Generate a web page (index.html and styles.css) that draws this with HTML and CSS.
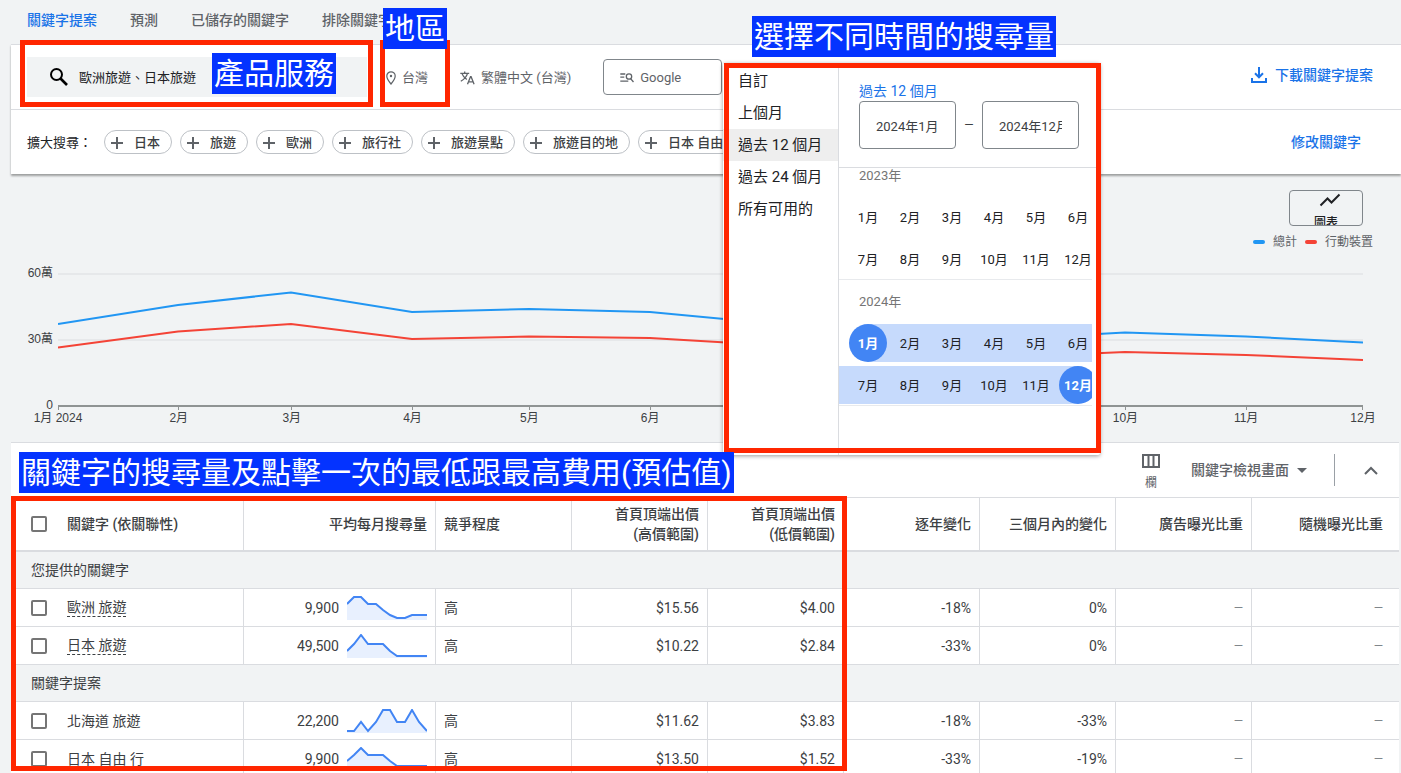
FILE: index.html
```html
<!DOCTYPE html>
<html lang="zh-Hant">
<head>
<meta charset="utf-8">
<title>關鍵字提案</title>
<meta name="viewport" content="width=device-width, initial-scale=1">
<link rel="stylesheet" href="styles.css">
</head>
<body>
<div class="page">
  <nav class="tabs">
    <a class="tab tab-active" href="#">關鍵字提案</a>
    <a class="tab" href="#">預測</a>
    <a class="tab" href="#">已儲存的關鍵字</a>
    <a class="tab" href="#">排除關鍵字</a>
  </nav>

  <header class="panel">
    <div class="toolbar">
      <label class="search">
        <svg width="20" height="20" viewBox="0 0 20 20" fill="none" stroke="#000" stroke-width="2"><circle cx="7.500" cy="7.500" r="5.500"/><path d="M11.500 11.500l6.500 6.500" stroke-width="2.600"/></svg>
        <input class="search-input" type="text" value="歐洲旅遊、日本旅遊" aria-label="搜尋關鍵字">
      </label>
      <button class="filter filter-place" type="button">
        <svg width="10" height="14" viewBox="0 0 10 14" fill="none" stroke="#5f6368" stroke-width="1.200"><path d="M5 13C2.500 10 .8 7.300.8 5a4.200 4.200 0 0 1 8.400 0C9.200 7.300 7.500 10 5 13z"/><circle cx="5" cy="5" r="1.200" fill="#5f6368" stroke="none"/></svg>
        台灣
      </button>
      <button class="filter filter-language" type="button">
        <svg width="15" height="14" viewBox="0 0 15 14" fill="none" stroke="#5f6368" stroke-width="1.300"><path d="M.3 2.400h8.900M4.700.5v1.900M7.500 2.400C6.500 6 4 8.500.8 10.300M2 2.600c.8 2.400 2.600 4.400 4.800 5.900M7.500 13.300l3-7.600h.6l3 7.600M8.600 10.800h4.400"/></svg>
        繁體中文 (台灣)
      </button>
      <button class="network" type="button">
        <svg width="14" height="12" viewBox="0 0 14 12" fill="none" stroke="#5f6368" stroke-width="1.300"><path d="M.3 2h5M.3 5.200h4M.3 9.200h8M10.800 6.800l2.700 3.200"/><circle cx="9" cy="4.500" r="2.700"/></svg>
        Google
      </button>
      <button class="link-button download" type="button">
        <svg width="16" height="16" viewBox="0 0 16 16" fill="none" stroke="#1a73e8" stroke-width="2"><path d="M8 0v10M4 6.300l4 4 4-4M1 11v4h14v-4"/></svg>
        下載關鍵字提案
      </button>
    </div>
    <div class="expand">
      <span class="expand-label">擴大搜尋：</span>
      <button class="chip" type="button"><svg class="plus" viewBox="0 0 12 12"><path d="M6 0v12M0 6h12"/></svg>日本</button>
      <button class="chip" type="button"><svg class="plus" viewBox="0 0 12 12"><path d="M6 0v12M0 6h12"/></svg>旅遊</button>
      <button class="chip" type="button"><svg class="plus" viewBox="0 0 12 12"><path d="M6 0v12M0 6h12"/></svg>歐洲</button>
      <button class="chip" type="button"><svg class="plus" viewBox="0 0 12 12"><path d="M6 0v12M0 6h12"/></svg>旅行社</button>
      <button class="chip" type="button"><svg class="plus" viewBox="0 0 12 12"><path d="M6 0v12M0 6h12"/></svg>旅遊景點</button>
      <button class="chip" type="button"><svg class="plus" viewBox="0 0 12 12"><path d="M6 0v12M0 6h12"/></svg>旅遊目的地</button>
      <button class="chip" type="button"><svg class="plus" viewBox="0 0 12 12"><path d="M6 0v12M0 6h12"/></svg>日本 自由 行</button>
      <button class="link-button edit" type="button">修改關鍵字</button>
    </div>
  </header>

  <section class="chart">
    <button class="chart-type" type="button">
      <svg width="22" height="14" viewBox="0 0 22 14" fill="none" stroke="#202124" stroke-width="2"><path d="M1.500 12.500l7-7 4 4L20.500 1.500"/></svg>
      <span>圖表</span>
    </button>
    <div class="legend">
      <span class="legend-item"><i class="swatch swatch-total"></i>總計</span>
      <span class="legend-item"><i class="swatch swatch-mobile"></i>行動裝置</span>
    </div>
    <div class="plot">
      <div class="y-axis"><span>60萬</span><span>30萬</span><span>0</span></div>
      <div class="plot-main">
        <svg class="lines" viewBox="0 0 1305 139" preserveAspectRatio="none">
          <path class="grid-line" d="M0 3H1305M0 69H1305"/>
          <path class="axis-line" d="M0 135H1305"/>
          <path class="tick-line" d="M.5 135v4M120.500 135v4M233.500 135v4M354.500 135v4M471.500 135v4M592.500 135v4M709.500 135v4M830.500 135v4M950.500 135v4M1067.500 135v4M1188.500 135v4M1304.500 135v4"/>
          <polyline class="line-total" points="0,53 120,34 233,21.500 354,41 471,38 592,41 709,52 830,58 950,68 1067,61.500 1188,65.500 1305,71.500"/>
          <polyline class="line-mobile" points="0,76.500 120,60.500 233,53 354,68 471,65.500 592,67 709,74 830,80 950,86 1067,81 1188,84 1305,89"/>
        </svg>
        <div class="x-axis">
          <span class="days-31"><b>1月 2024</b></span><span class="days-29"><b>2月</b></span><span class="days-31"><b>3月</b></span><span class="days-30"><b>4月</b></span><span class="days-31"><b>5月</b></span><span class="days-30"><b>6月</b></span><span class="days-31"><b>7月</b></span><span class="days-31"><b>8月</b></span><span class="days-30"><b>9月</b></span><span class="days-31"><b>10月</b></span><span class="days-30"><b>11月</b></span><span class="days-0"><b>12月</b></span>
        </div>
      </div>
    </div>
  </section>

  <section class="results">
    <div class="results-bar">
      <button class="columns-button" type="button">
        <svg width="18" height="14" viewBox="0 0 18 14" fill="none" stroke="#5f6368" stroke-width="2"><path d="M1 1h16v12H1zM6.500 1v12M11.500 1v12"/></svg>
        欄
      </button>
      <button class="view-button" type="button">關鍵字檢視畫面
        <svg width="10" height="5" viewBox="0 0 10 5" fill="#5f6368"><path d="M0 0h10L5 5z"/></svg>
      </button>
      <span class="divider"></span>
      <button class="collapse" type="button" aria-label="收合">
        <svg width="14" height="9" viewBox="0 0 14 9" fill="none" stroke="#5f6368" stroke-width="2"><path d="M1 8l6-6 6 6"/></svg>
      </button>
    </div>
    <table class="table">
      <colgroup><col class="col-keyword"><col class="col-volume"><col class="col"><col class="col"><col class="col"><col class="col"><col class="col"><col class="col"><col></colgroup>
      <thead>
        <tr>
          <th class="left"><label class="keyword"><input class="check" type="checkbox"><span>關鍵字 (依關聯性)</span></label></th>
          <th>平均每月搜尋量</th>
          <th class="left">競爭程度</th>
          <th>首頁頂端出價<br>(高價範圍)</th>
          <th>首頁頂端出價<br>(低價範圍)</th>
          <th>逐年變化</th>
          <th>三個月內的變化</th>
          <th>廣告曝光比重</th>
          <th>隨機曝光比重</th>
        </tr>
      </thead>
      <tbody>
        <tr class="group"><td colspan="9">您提供的關鍵字</td></tr>
        <tr>
          <td class="left"><label class="keyword"><input class="check" type="checkbox"><span class="provided">歐洲 旅遊</span></label></td>
          <td><div class="volume">9,900<svg class="spark" viewBox="0 0 80 24"><path class="spark-area" d="M0 8L7 1H14L21 8H29L36 14 43 19 50 22H58L65 19H80V24H0z"/><path class="spark-line" d="M0 8L7 1H14L21 8H29L36 14 43 19 50 22H58L65 19H80"/></svg></div></td>
          <td class="left">高</td><td>$15.56</td><td>$4.00</td><td>-18%</td><td>0%</td><td class="none">—</td><td class="none">—</td>
        </tr>
        <tr>
          <td class="left"><label class="keyword"><input class="check" type="checkbox"><span class="provided">日本 旅遊</span></label></td>
          <td><div class="volume">49,500<svg class="spark" viewBox="0 0 80 24"><path class="spark-area" d="M0 17L7 10 14 1 21 10H36L43 17 50 22H80V24H0z"/><path class="spark-line" d="M0 17L7 10 14 1 21 10H36L43 17 50 22H80"/></svg></div></td>
          <td class="left">高</td><td>$10.22</td><td>$2.84</td><td>-33%</td><td>0%</td><td class="none">—</td><td class="none">—</td>
        </tr>
        <tr class="group"><td colspan="9">關鍵字提案</td></tr>
        <tr>
          <td class="left"><label class="keyword"><input class="check" type="checkbox"><span>北海道 旅遊</span></label></td>
          <td><div class="volume">22,200<svg class="spark" viewBox="0 0 80 24"><path class="spark-area" d="M0 22H7L14 13 21 22 29 13 36 1H43L50 13H58L65 1 72 13 80 22V24H0z"/><path class="spark-line" d="M0 22H7L14 13 21 22 29 13 36 1H43L50 13H58L65 1 72 13 80 22"/></svg></div></td>
          <td class="left">高</td><td>$11.62</td><td>$3.83</td><td>-18%</td><td>-33%</td><td class="none">—</td><td class="none">—</td>
        </tr>
        <tr>
          <td class="left"><label class="keyword"><input class="check" type="checkbox"><span>日本 自由 行</span></label></td>
          <td><div class="volume">9,900<svg class="spark" viewBox="0 0 80 24"><path class="spark-area" d="M0 14L7 8 14 1 21 8H36L43 14 50 19H80V24H0z"/><path class="spark-line" d="M0 14L7 8 14 1 21 8H36L43 14 50 19H80"/></svg></div></td>
          <td class="left">高</td><td>$13.50</td><td>$1.52</td><td>-33%</td><td>-19%</td><td class="none">—</td><td class="none">—</td>
        </tr>
      </tbody>
    </table>
  </section>

  <div class="date-popup">
    <div class="presets">
      <button class="preset" type="button">自訂</button>
      <button class="preset" type="button">上個月</button>
      <button class="preset preset-active" type="button">過去 12 個月</button>
      <button class="preset" type="button">過去 24 個月</button>
      <button class="preset" type="button">所有可用的</button>
    </div>
    <div class="calendar">
      <div class="range">
        <div class="range-title">過去 12 個月</div>
        <div class="range-fields">
          <input class="range-input" type="text" value="2024年1月" aria-label="開始月份">
          <span class="range-dash">—</span>
          <input class="range-input" type="text" value="2024年12月" aria-label="結束月份">
        </div>
      </div>
      <div class="years">
        <div class="year">
          <div class="year-title year-title-top">2023年</div>
          <div class="months"><div class="month"><button type="button">1月</button></div><div class="month"><button type="button">2月</button></div><div class="month"><button type="button">3月</button></div><div class="month"><button type="button">4月</button></div><div class="month"><button type="button">5月</button></div><div class="month"><button type="button">6月</button></div></div>
          <div class="months"><div class="month"><button type="button">7月</button></div><div class="month"><button type="button">8月</button></div><div class="month"><button type="button">9月</button></div><div class="month"><button type="button">10月</button></div><div class="month"><button type="button">11月</button></div><div class="month"><button type="button">12月</button></div></div>
        </div>
        <div class="year">
          <div class="year-title">2024年</div>
          <div class="months in-range"><div class="month month-start"><button type="button">1月</button></div><div class="month"><button type="button">2月</button></div><div class="month"><button type="button">3月</button></div><div class="month"><button type="button">4月</button></div><div class="month"><button type="button">5月</button></div><div class="month"><button type="button">6月</button></div></div>
          <div class="months in-range continued"><div class="month"><button type="button">7月</button></div><div class="month"><button type="button">8月</button></div><div class="month"><button type="button">9月</button></div><div class="month"><button type="button">10月</button></div><div class="month"><button type="button">11月</button></div><div class="month month-end"><button type="button">12月</button></div></div>
        </div>
      </div>
    </div>
  </div>

  <div class="frame frame-search"></div>
  <div class="frame frame-place"></div>
  <div class="frame frame-date"></div>
  <div class="frame frame-table"></div>
  <div class="note note-search">產品服務</div>
  <div class="note note-place">地區</div>
  <div class="note note-date">選擇不同時間的搜尋量</div>
  <div class="note note-table">關鍵字的搜尋量及點擊一次的最低跟最高費用(預估值)</div>
</div>
</body>
</html>
```

FILE: styles.css
```css
* { box-sizing: border-box; }

body {
  margin: 0;
  overflow: hidden;
  background: #f1f3f4;
  color: #3c4043;
  font: 14px/20px Roboto, "Noto Sans CJK TC", sans-serif;
}

button, input { font: inherit; color: inherit; }
button { padding: 0; border: 0; background: none; white-space: nowrap; cursor: pointer; }
svg { display: block; flex: none; }

.page { position: relative; height: 100vh; overflow: hidden; padding-left: 11px; }

/* Tabs */
.tabs { display: flex; align-items: center; gap: 33px; height: 44px; padding: 0 16px 4px; }
.tab { color: #5f6368; text-decoration: none; white-space: nowrap; font-weight: 500; }
.tab-active { color: #1a73e8; }

/* Search panel */
.panel { background: #fff; border-top: 1px solid #dadce0; box-shadow: 0 2px 2px rgba(0, 0, 0, 0.35); font-size: 13px; }
.toolbar { display: flex; align-items: center; height: 65px; padding: 0 28px 0 16px; border-bottom: 1px solid #dadce0; }
.search { display: flex; align-items: center; gap: 10px; width: 340px; height: 40px; padding: 0 22px; background: #f1f3f4; }
.search-input { flex: 1; min-width: 0; padding: 2px 0 0; border: 0; outline: 0; background: none; color: #202124; }
.filter { display: flex; align-items: center; gap: 6px; padding-top: 1px; color: #5f6368; }
.filter-place { margin-left: 19px; }
.filter-language { margin-left: 32px; }
.network { display: flex; align-items: center; gap: 6px; width: 119px; height: 36px; margin-left: 32px; padding: 2px 0 0 16px; border: 1px solid #80868b; border-radius: 4px; color: #5f6368; }
.link-button { display: flex; align-items: center; gap: 8px; margin-left: auto; color: #1a73e8; font-size: 14px; font-weight: 500; }
.download { padding-bottom: 4px; }
.expand { display: flex; align-items: center; gap: 8px; height: 64px; padding: 0 40px 0 16px; }
.expand-label { margin-right: 4px; padding-top: 2px; color: #202124; }
.chip { display: flex; align-items: center; gap: 11px; height: 24px; padding: 1px 11px 0 6px; border: 1px solid #bdc1c6; border-radius: 12px; font-weight: 500; }
.plus { width: 12px; height: 12px; fill: none; stroke: #5f6368; stroke-width: 2; }

/* Chart */
.chart { display: flex; flex-direction: column; align-items: flex-end; height: 268px; padding: 16px 28px 0 0; font-size: 12px; line-height: 16px; }
.chart-type { display: flex; flex-direction: column; align-items: center; gap: 8px; width: 74px; height: 36px; margin-right: 10px; padding: 2px 0 0 8px; overflow: hidden; border: 1px solid #80868b; border-radius: 4px; color: #202124; font-weight: 500; }
.chart-type span { padding-right: 8px; }
.legend { display: flex; gap: 8px; margin-top: 8px; color: #5f6368; }
.legend-item { display: flex; align-items: center; gap: 8px; }
.swatch { width: 12px; height: 4px; border-radius: 2px; }
.swatch-total { background: #2196f3; }
.swatch-mobile { background: #f44336; }
.plot { display: flex; gap: 5px; width: 100%; margin-top: 15px; padding-right: 10px; font-family: "Liberation Sans", "Noto Sans CJK TC", sans-serif; }
.y-axis { display: flex; flex-direction: column; justify-content: space-between; width: 42px; height: 148px; text-align: right; }
.plot-main { flex: 1; min-width: 0; padding-top: 6px; }
.lines { width: 100%; height: 139px; }
.lines path, .lines polyline { fill: none; stroke-width: 2; vector-effect: non-scaling-stroke; }
.lines .grid-line { stroke: #e6e8ea; }
.lines .axis-line { stroke: #8f9393; }
.lines .tick-line { stroke: #8f9393; stroke-width: 1; }
.lines .line-total { stroke: #2196f3; }
.lines .line-mobile { stroke: #f44336; }
.x-axis { display: flex; }
.x-axis span { display: flex; flex-basis: 0; }
.x-axis b { display: flex; justify-content: center; width: 0; font-weight: 400; white-space: nowrap; }
.days-31 { flex-grow: 31; }
.days-30 { flex-grow: 30; }
.days-29 { flex-grow: 29; }
.days-0 { flex-grow: 0; }

/* Results */
.results { margin-right: 2px; background: #fff; border-top: 1px solid #dadce0; }
.results-bar { display: flex; align-items: center; justify-content: flex-end; height: 54px; padding-right: 21px; color: #5f6368; }
.columns-button { display: flex; flex-direction: column; align-items: center; gap: 7px; margin-right: 31px; padding-top: 5px; font-size: 12px; line-height: 16px; }
.view-button { display: flex; align-items: center; gap: 8px; font-weight: 500; }
.divider { width: 1px; height: 32px; margin: 0 29px 0 27px; background: #9aa0a6; }

.table { width: 100%; table-layout: fixed; border-collapse: separate; border-spacing: 0; border-top: 1px solid #dadce0; }
.col-keyword { width: 233px; }
.col-volume { width: 192px; }
.col { width: 136px; }
.table th, .table td { height: 38px; padding: 0 8px; border-right: 1px solid #dadce0; border-bottom: 1px solid #dadce0; text-align: right; white-space: nowrap; }
.table th { height: 54px; border-bottom-width: 2px; font-weight: 500; }
.table th:last-child, .table td:last-child { padding-right: 16px; border-right: 0; }
.table .left { text-align: left; }
.table .left:first-child { padding-left: 20px; }
.table .group td { height: 37px; padding-left: 20px; background: #f1f3f4; text-align: left; }
.table .none { color: #80868b; font-size: 12px; }
.keyword { display: flex; align-items: center; gap: 20px; }
.check { appearance: none; width: 16px; height: 16px; margin: 0; border: 2px solid #757575; border-radius: 2px; }
.provided { line-height: 18px; border-bottom: 1px dashed #3c4043; }
.volume { display: flex; align-items: center; justify-content: flex-end; gap: 8px; }
.spark { width: 80px; height: 24px; }
.spark-area { fill: #e8f0fe; }
.spark-line { fill: none; stroke: #4285f4; stroke-width: 2; }

/* Date popup */
.date-popup { position: absolute; top: 63px; left: 723px; display: flex; width: 377px; height: 392px; background: #fff; border-radius: 2px; box-shadow: 0 1px 4px rgba(0, 0, 0, 0.4); }
.presets { display: flex; flex-direction: column; width: 116px; padding-top: 2px; border-right: 1px solid #dadce0; }
.preset { height: 32px; padding-left: 15px; color: #202124; font-size: 15px; text-align: left; }
.preset-active { background: #eee; }
.calendar { flex: 1; min-width: 0; font-size: 13px; }
.range { height: 105px; padding: 18px 20px 0; border-bottom: 1px solid #dadce0; }
.range-title { color: #1a73e8; font-size: 14px; }
.range-fields { display: flex; align-items: center; justify-content: space-between; width: 220px; }
.range-dash { font-size: 12px; }
.range-input { width: 97px; height: 48px; padding: 0 16px; border: 1px solid #80868b; border-radius: 4px; }
.years { width: 253px; overflow: hidden; color: #202124; }
.year { border-bottom: 1px solid #e8eaed; }
.year-title { height: 42px; padding: 12px 0 0 20px; color: #757575; }
.year-title-top { height: 28px; padding-top: 0; line-height: 15px; }
.months { display: flex; width: 260px; height: 38px; margin: 2px 0 4px; padding-left: 8px; }
.months:last-child { margin-bottom: 1px; }
.month { flex: none; display: flex; justify-content: center; width: 42px; }
.month button { width: 38px; height: 38px; padding-top: 2px; border-radius: 50%; }
.in-range .month { background: #c6dafc; }
.in-range .month-start { background: linear-gradient(to right, #fff 50%, #c6dafc 50%); }
.in-range .month-end { background: linear-gradient(to right, #c6dafc 50%, #fff 50%); }
.in-range { width: 253px; overflow: hidden; }
.continued .month:first-child { margin-left: -8px; padding-left: 8px; width: 50px; }
.month-start button, .month-end button { background: #4285f4; color: #fff; font-weight: 700; }

/* Annotations */
.frame { position: absolute; border: 5px solid #ff2600; pointer-events: none; }
.frame-search { top: 40px; left: 20px; width: 353px; height: 67px; }
.frame-place { top: 40px; left: 380px; width: 70px; height: 67px; }
.frame-date { top: 63px; left: 724px; width: 377px; height: 390px; }
.frame-table { top: 496px; left: 11px; width: 836px; height: 275px; }
.note { position: absolute; padding: 0 2px; background: #0433ff; color: #fff; font-size: 30px; line-height: 41px; white-space: nowrap; }
.note-search { top: 53px; left: 212px; }
.note-place { top: 8px; left: 383px; }
.note-date { top: 16px; left: 752px; }
.note-table { top: 452px; left: 19px; }
```
